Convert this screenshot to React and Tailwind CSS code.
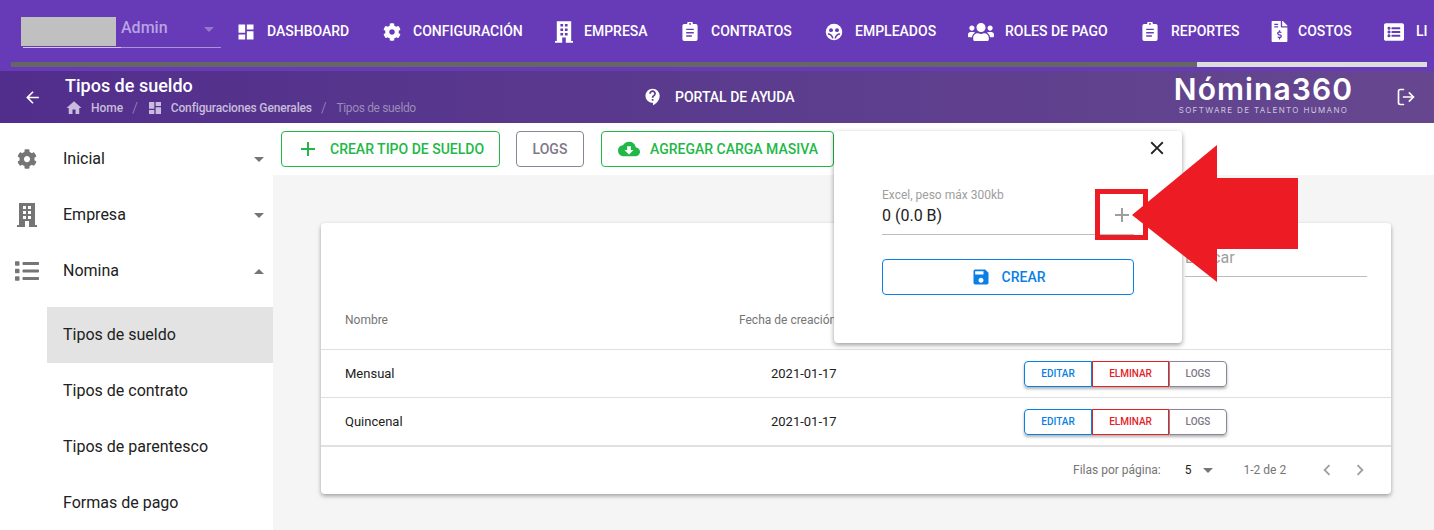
import React from "react";
import {
  MdDashboard,
  MdArrowBack,
  MdHome,
  MdContactSupport,
  MdSave,
  MdCloudDownload,
  MdAdd,
  MdClose,
  MdChevronLeft,
  MdChevronRight,
} from "react-icons/md";
import { FaCog, FaUsers, FaFileInvoiceDollar, FaListAlt, FaList } from "react-icons/fa";
import { LogOut } from "lucide-react";

const Building = ({ className }) => (
  <svg viewBox="0 0 20 24" className={className} fill="currentColor">
    <path
      fillRule="evenodd"
      d="M2 0h16v22h2v2H0v-2h2V0zm4 3v3h3V3H6zm5 0v3h3V3h-3zM6 8v3h3V8H6zm5 0v3h3V8h-3zm-5 5v3h3v-3H6zm5 0v3h3v-3h-3zm-3 5v6h4v-6H8z"
    />
  </svg>
);

const Clipboard = ({ className }) => (
  <svg viewBox="0 0 16 20" className={className} fill="currentColor">
    <path
      fillRule="evenodd"
      d="M5 2a3 3 0 0 1 6 0h3a2 2 0 0 1 2 2v14a2 2 0 0 1-2 2H2a2 2 0 0 1-2-2V4a2 2 0 0 1 2-2h3zm3-1a1 1 0 1 0 0 2 1 1 0 0 0 0-2zM4 7v1.5h8V7H4zm0 3.5V12h8v-1.5H4zM4 14v1.5h6V14H4z"
    />
  </svg>
);

const Employee = ({ className }) => (
  <svg viewBox="0 0 24 24" className={className}>
    <circle cx="12" cy="12" r="11" fill="currentColor" />
    <circle cx="8" cy="9.5" r="2.6" fill="#673ab7" />
    <circle cx="16" cy="9.5" r="2.6" fill="#673ab7" />
    <path d="M4 14.5c3 0 5 1 6.5 6M20 14.5c-3 0-5 1-6.5 6" fill="none" stroke="#673ab7" strokeWidth="2" />
  </svg>
);

const Caret = ({ up, className }) => (
  <svg viewBox="0 0 10 5" className={className} fill="currentColor">
    <path d={up ? "M0 5l5-5 5 5z" : "M0 0l5 5 5-5z"} />
  </svg>
);

const navItems = [
  { label: "DASHBOARD", icon: <MdDashboard className="w-[20px] h-[20px]" />, w: "w-[146px]", gap: "ml-[6px]" },
  { label: "CONFIGURACIÓN", icon: <FaCog className="w-[18px] h-[18px]" />, w: "w-[172px]", gap: "ml-[6px]" },
  { label: "EMPRESA", icon: <Building className="w-[18px] h-[22px]" />, w: "w-[126px]", gap: "ml-[5px]" },
  { label: "CONTRATOS", icon: <Clipboard className="w-[16px] h-[19px]" />, w: "w-[144px]", gap: "ml-[6px]" },
  { label: "EMPLEADOS", icon: <Employee className="w-[18px] h-[18px]" />, w: "w-[147px]", gap: "ml-[6px]" },
  { label: "ROLES DE PAGO", icon: <FaUsers className="w-[26px] h-[22px]" />, w: "w-[169px]", gap: "ml-[9px]" },
  { label: "REPORTES", icon: <Clipboard className="w-[16px] h-[19px]" />, w: "w-[129px]", gap: "ml-[6px]" },
  { label: "COSTOS", icon: <FaFileInvoiceDollar className="w-[17px] h-[21px]" />, w: "w-[115px]", gap: "ml-[4px]" },
  { label: "LI", icon: <FaListAlt className="w-[20px] h-[20px]" />, w: "w-[50px]", gap: "ml-[7px]" },
];

const sideMenu = [
  { label: "Inicial", icon: <FaCog className="w-[20px] h-[20px]" /> },
  { label: "Empresa", icon: <Building className="w-[20px] h-[24px]" /> },
  { label: "Nomina", icon: <FaList className="w-[24px] h-[24px]" />, open: true },
];

const subMenu = ["Tipos de sueldo", "Tipos de contrato", "Tipos de parentesco", "Formas de pago"];

const rows = [
  { name: "Mensual", date: "2021-01-17" },
  { name: "Quincenal", date: "2021-01-17" },
];

const App = () => {
  return (
    <div className="w-[1434px] h-[530px] overflow-hidden relative bg-white font-['Roboto',sans-serif]">
      {/* barra superior */}
      <div className="h-[71px] bg-[#673ab7] flex flex-col">
        <div className="h-[62px] flex items-center overflow-hidden">
          <div className="w-[200px] ml-[21px] mr-[10px] shrink-0 self-start pt-[17px] flex flex-col">
            <div className="flex h-[30px]">
              <div className="w-[95px] h-[29px] bg-[#c0c0c0]" />
              <span className="ml-[5px] text-[16px] font-medium text-[#b9a3e3] leading-[22px]">Admin</span>
              <Caret className="w-[10px] h-[5px] ml-[36px] mt-[10px] text-[#9379c8]" />
            </div>
            <div className="h-px ml-[2px] w-[198px] flex">
              <div className="w-[98px] bg-[#d5c8ee]" />
              <div className="flex-1 bg-[#a993d6]" />
            </div>
          </div>
          {navItems.map((item) => (
            <div key={item.label} className={`${item.w} shrink-0 flex items-center mt-[1px] text-white text-[14px] font-medium`}>
              <span className="w-[30px] flex justify-center shrink-0">{item.icon}</span>
              <span className={`${item.gap} whitespace-nowrap`}>{item.label}</span>
            </div>
          ))}
        </div>
        <div className="h-[5px] ml-[11px] mr-[7px] flex">
          <div className="w-[1186px] bg-[#666666]" />
          <div className="flex-1 bg-[#dddddd]" />
        </div>
      </div>

      {/* barra de titulo */}
      <div className="h-[52px] bg-gradient-to-r from-[#512e8c] to-[#66478f] flex items-center text-white">
        <div className="w-[65px] pl-[23px] shrink-0">
          <MdArrowBack className="w-[19px] h-[19px]" />
        </div>
        <div className="w-[578px] shrink-0 pb-[3px]">
          <div className="text-[18px] font-medium leading-[22px] pt-[1px]">Tipos de sueldo</div>
          <div className="flex items-center text-[12px] leading-[16px] mt-[2px] text-[#c9bcdc]">
            <MdHome className="w-[18px] h-[18px]" />
            <span className="ml-[8px] font-medium">Home</span>
            <span className="mx-[9px] text-[14px] font-light text-[#a793c4]">/</span>
            <MdDashboard className="w-[16px] h-[16px]" />
            <span className="ml-[8px] font-medium tracking-[-0.15px]">Configuraciones Generales</span>
            <span className="ml-[9px] mr-[10px] text-[14px] font-light text-[#a793c4]">/</span>
            <span className="text-[#9d8ab8] tracking-[-0.35px]">Tipos de sueldo</span>
          </div>
        </div>
        <MdContactSupport className="w-[20px] h-[20px]" />
        <span className="ml-[12px] w-[499px] text-[14px] font-medium">PORTAL DE AYUDA</span>
        <div className="w-[179px] shrink-0 flex flex-col items-center pb-[4px]">
          <div className="font-['Inter',sans-serif] font-semibold text-[30px] leading-[28px] tracking-[1.1px]">Nómina360</div>
          <div className="font-['Inter',sans-serif] text-[8px] leading-[9px] mt-[3px] tracking-[1.35px] text-[#cfc6dd] whitespace-nowrap">
            SOFTWARE DE TALENTO HUMANO
          </div>
        </div>
        <LogOut className="w-[20px] h-[20px] ml-[43px]" strokeWidth={2} />
      </div>

      <div className="flex h-[407px]">
        {/* menu lateral */}
        <div className="w-[273px] shrink-0 bg-white pt-[8px]">
          {sideMenu.map((m) => (
            <div key={m.label} className="h-[56px] flex items-center text-[16px] text-[#212121]">
              <span className="w-[54px] flex justify-center text-[#757575] shrink-0">{m.icon}</span>
              <span className="ml-[9px] flex-1">{m.label}</span>
              <Caret up={m.open} className="w-[10px] h-[5px] mr-[9px] text-[#757575]" />
            </div>
          ))}
          <div className="pl-[47px] mt-[8px]">
            {subMenu.map((s, i) => (
              <div
                key={s}
                className={`h-[56px] flex items-center pl-[16px] text-[16px] text-[#212121] ${i === 0 ? "bg-[#e3e3e3]" : ""}`}
              >
                {s}
              </div>
            ))}
          </div>
        </div>

        {/* contenido */}
        <div className="flex-1 bg-[#f5f5f5]">
          <div className="h-[52px] bg-white pt-[8px] pl-[8px] flex text-[14px] font-medium">
            <button className="w-[219px] h-[36px] border border-[#22b848] rounded-[4px] text-[#22b848] flex items-center pl-[14px]">
              <MdAdd className="w-[24px] h-[24px]" />
              <span className="ml-[10px]">CREAR TIPO DE SUELDO</span>
            </button>
            <button className="w-[68px] h-[36px] ml-[16px] border border-[#8c8595] rounded-[4px] text-[#7d7887] flex items-center justify-center">
              LOGS
            </button>
            <button className="w-[233px] h-[36px] ml-[17px] border border-[#22b848] rounded-[4px] text-[#22b848] flex items-center pl-[16px]">
              <MdCloudDownload className="w-[22px] h-[22px]" />
              <span className="ml-[10px]">AGREGAR CARGA MASIVA</span>
            </button>
          </div>

          <div className="ml-[48px] mt-[48px] w-[1070px] h-[271px] bg-white rounded-[4px] shadow-[0_2px_4px_rgba(0,0,0,0.35)]">
            <div className="h-[54px] flex justify-end pr-[24px]">
              <div className="w-[182px] h-[54px] border-b border-[#bdbdbd] text-[16px] text-[#9e9e9e] flex items-end pb-[6px]">
                Buscar
              </div>
            </div>
            <div className="h-[73px] border-b border-[#e0e0e0] flex items-center text-[12px] text-[#757575] pt-[14px]">
              <span className="ml-[24px] w-[394px]">Nombre</span>
              <span>Fecha de creación</span>
            </div>
            {rows.map((r) => (
              <div key={r.name} className="h-[48px] border-b border-[#e0e0e0] flex items-center text-[13px] text-[#212121]">
                <span className="ml-[24px] w-[426px]">{r.name}</span>
                <span className="w-[253px]">{r.date}</span>
                <div className="flex text-[10px] font-medium h-[26px] shadow-[0_2px_3px_rgba(0,0,0,0.3)] rounded-[4px]">
                  <button className="w-[68px] border border-[#0a7fe6] rounded-l-[4px] text-[#0a7fe6]">EDITAR</button>
                  <button className="w-[77px] border border-[#e32328] text-[#e32328]">ELMINAR</button>
                  <button className="w-[58px] border border-[#8c8595] rounded-r-[4px] text-[#7d7887]">LOGS</button>
                </div>
              </div>
            ))}
            <div className="h-[47px] border-t border-[#e0e0e0] flex items-center text-[12px] text-[#757575]">
              <span className="ml-[752px]">Filas por página:</span>
              <span className="ml-[24px] text-[#212121]">5</span>
              <Caret className="w-[10px] h-[5px] ml-[11px] text-[#757575]" />
              <span className="ml-[31px]">1-2 de 2</span>
              <MdChevronLeft className="w-[22px] h-[22px] ml-[30px] text-[#9e9e9e]" />
              <MdChevronRight className="w-[22px] h-[22px] ml-[11px] text-[#9e9e9e]" />
            </div>
          </div>
        </div>
      </div>

      {/* popover de carga */}
      <div className="absolute left-[834px] top-[131px] w-[348px] h-[212px] bg-white rounded-[4px] shadow-[0_2px_5px_rgba(0,0,0,0.4)] px-[48px] pt-[57px]">
        <MdClose className="absolute right-[14px] top-[6px] w-[22px] h-[22px] text-[#212121]" />
        <div className="text-[12px] leading-[14px] text-[#9e9e9e]">Excel, peso máx 300kb</div>
        <div className="h-[32px] border-b border-[#bdbdbd] text-[16px] leading-[26px] text-[#212121] mt-[1px]">0 (0.0 B)</div>
        <button className="mt-[24px] w-full h-[36px] border border-[#0a7fe6] rounded-[4px] text-[#0a7fe6] text-[14px] font-medium flex items-center justify-center">
          <MdSave className="w-[20px] h-[20px]" />
          <span className="ml-[11px]">CREAR</span>
        </button>
      </div>

      {/* flecha de la captura */}
      <div className="absolute left-[1095px] top-[189px] w-[53px] h-[51px] border-[5px] border-[#ed1c24] flex items-center justify-center">
        <MdAdd className="w-[24px] h-[24px] text-[#9e9e9e]" />
      </div>
      <svg className="absolute left-[1130px] top-[143px] w-[170px] h-[140px]" viewBox="0 0 170 140">
        <path d="M2 72L87 2v33h81v71H87v33z" fill="#ed1c24" />
      </svg>
    </div>
  );
};

export default App;
